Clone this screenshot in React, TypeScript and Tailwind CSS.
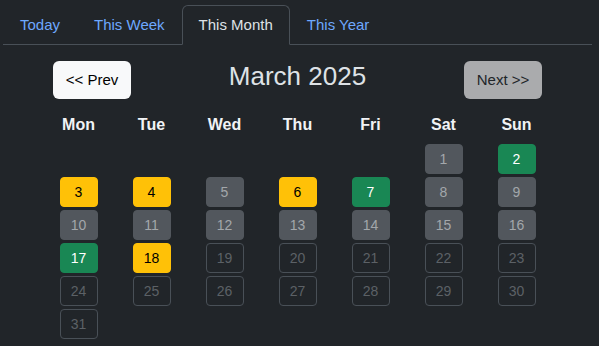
import { useState } from 'react';

type Kind = 'yellow' | 'green' | 'gray' | 'outline';

// March 2025 — Saturday the 1st, so five blanks before it
const days: Record<number, Kind> = {
  1: 'gray', 2: 'green',
  3: 'yellow', 4: 'yellow', 5: 'gray', 6: 'yellow', 7: 'green', 8: 'gray', 9: 'gray',
  10: 'gray', 11: 'gray', 12: 'gray', 13: 'gray', 14: 'gray', 15: 'gray', 16: 'gray',
  17: 'green', 18: 'yellow',
};

const kindClass: Record<Kind, string> = {
  yellow: 'bg-[#ffc107] border-[#ffc107] text-black',
  green: 'bg-[#198754] border-[#198754] text-white',
  gray: 'bg-[#52575d] border-[#52575d] text-[#a3a7ab]',
  outline: 'bg-transparent border-[#495057] text-[#5c6166]',
};

const tabs = ['Today', 'This Week', 'This Month', 'This Year'];
const weekdays = ['Mon', 'Tue', 'Wed', 'Thu', 'Fri', 'Sat', 'Sun'];

export default function App() {
  const [active, setActive] = useState('This Month');
  const cells: (number | null)[] = [...Array(5).fill(null), ...Array.from({ length: 31 }, (_, i) => i + 1)];

  return (
    <div className="min-h-[346px] w-[599px] bg-[#212529] text-[#dee2e6] font-['Liberation_Sans',Arial,sans-serif] pt-[5px]">
      {/* Tabs */}
      <ul className="ml-[3px] w-[589px] h-[40px] flex border-b border-[#495057]">
        {tabs.map(t => (
          <li key={t}>
            <button
              onClick={() => setActive(t)}
              className={`block h-[40px] px-4 text-[15px] leading-6 border rounded-t-[6px] ${
                t === active
                  ? 'border-[#495057] border-b-[#212529] bg-[#212529] text-[#dee2e6]'
                  : 'border-transparent text-[#6ea8fe]'
              }`}
            >
              {t}
            </button>
          </li>
        ))}
      </ul>

      <div className="ml-[42px] w-[511px]">
        {/* Month header */}
        <div className="mt-[16px] px-[11px] flex items-start justify-between">
          <button className="w-[78px] h-[38px] rounded-[6px] bg-[#f8f9fa] text-black text-[15px]">&lt;&lt; Prev</button>
          <h2 className="text-[26px] leading-[30px] text-[#dee2e6]">March 2025</h2>
          <button className="w-[78px] h-[38px] rounded-[6px] bg-[#aaabad] text-[#212529] text-[15px]">Next &gt;&gt;</button>
        </div>

        {/* Weekdays */}
        <div className="mt-[14px] grid grid-cols-7">
          {weekdays.map(d => (
            <div key={d} className="text-center font-bold text-[16px] leading-6 text-[#f1f3f5]">{d}</div>
          ))}
        </div>

        {/* Days */}
        <div className="mt-[7px] grid grid-cols-7 gap-y-[3px]">
          {cells.map((n, i) => (
            <div key={i} className="flex justify-center">
              {n !== null && (
                <div
                  className={`w-[38px] h-[30px] rounded-[4px] border flex items-center justify-center text-[14px] ${
                    kindClass[days[n] ?? 'outline']
                  }`}
                >
                  {n}
                </div>
              )}
            </div>
          ))}
        </div>
      </div>
    </div>
  );
}
